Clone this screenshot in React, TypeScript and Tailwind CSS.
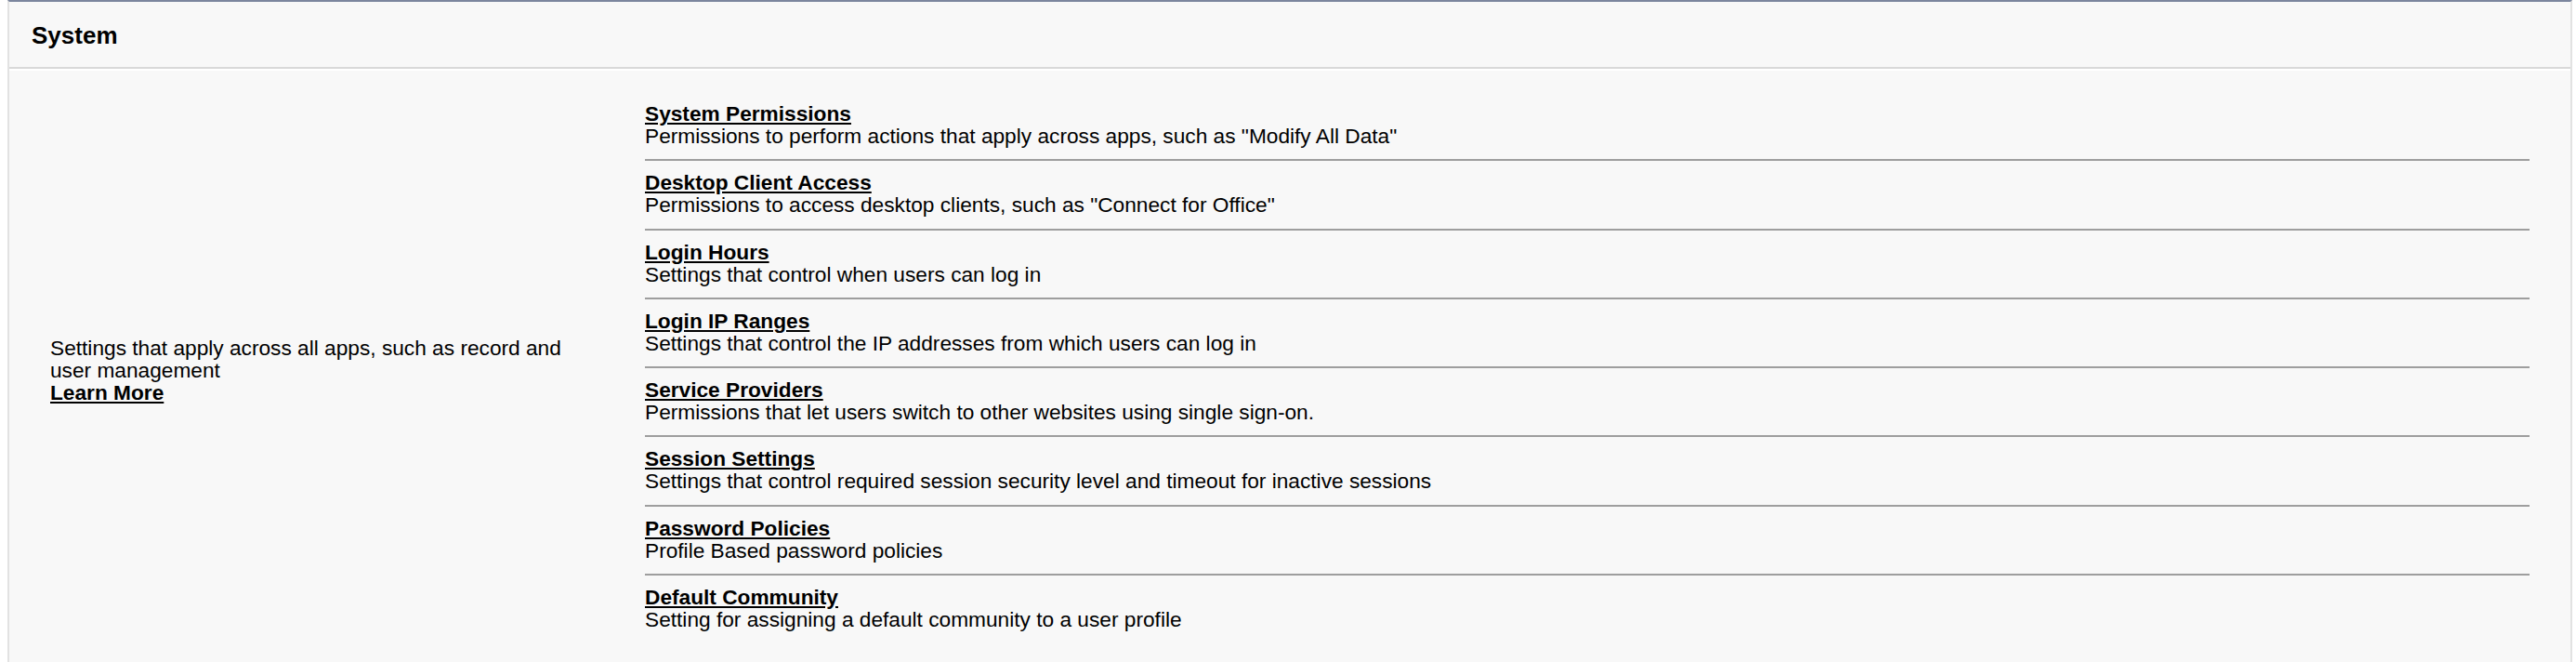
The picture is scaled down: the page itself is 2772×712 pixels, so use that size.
import React from 'react';

/* ================= Data ================= */
type SettingLink = {
  title: string;
  description: string;
};

const SYSTEM_LINKS: SettingLink[] = [
  {
    title: 'System Permissions',
    description: 'Permissions to perform actions that apply across apps, such as "Modify All Data"',
  },
  {
    title: 'Desktop Client Access',
    description: 'Permissions to access desktop clients, such as "Connect for Office"',
  },
  { title: 'Login Hours', description: 'Settings that control when users can log in' },
  {
    title: 'Login IP Ranges',
    description: 'Settings that control the IP addresses from which users can log in',
  },
  {
    title: 'Service Providers',
    description: 'Permissions that let users switch to other websites using single sign-on.',
  },
  {
    title: 'Session Settings',
    description: 'Settings that control required session security level and timeout for inactive sessions',
  },
  { title: 'Password Policies', description: 'Profile Based password policies' },
  {
    title: 'Default Community',
    description: 'Setting for assigning a default community to a user profile',
  },
];

/* ================= Page ================= */
export default function App() {
  return (
    <div className="min-h-screen bg-white pl-[8px] pr-[4px] font-['Liberation_Sans',Arial,sans-serif] text-black">
      <section className="border-x-2 border-t-2 border-x-[#e2e2e2] border-t-[#7c869e] bg-[#f8f8f8]">
        {/* Header */}
        <div className="flex h-[72px] items-center border-b-2 border-[#d9d9d9] pl-[24px] pt-[2px]">
          <h2 className="text-[26px] font-bold leading-[30px]">System</h2>
        </div>

        {/* Body */}
        <div className="flex border-t-2 border-white">
          <div className="flex w-[684px] shrink-0 items-center pl-[44px] pr-[50px] text-[22.7px] leading-[24px]">
            <p>
              Settings that apply across all apps, such as record and user management
              <br />
              <a href="#" className="font-bold underline">
                Learn More
              </a>
            </p>
          </div>

          <ul className="flex-1 pb-[28px] pr-[44px] pt-[23px]">
            {SYSTEM_LINKS.map((it) => (
              <li
                key={it.title}
                className="border-b-2 border-[#9e9e9e] pb-[12.25px] pt-[12px] text-[22.7px] leading-[24px] last:border-none"
              >
                <a href="#" className="block w-fit font-bold leading-[23px] underline">
                  {it.title}
                </a>
                <div className="leading-[25px]">{it.description}</div>
              </li>
            ))}
          </ul>
        </div>
      </section>
    </div>
  );
}
